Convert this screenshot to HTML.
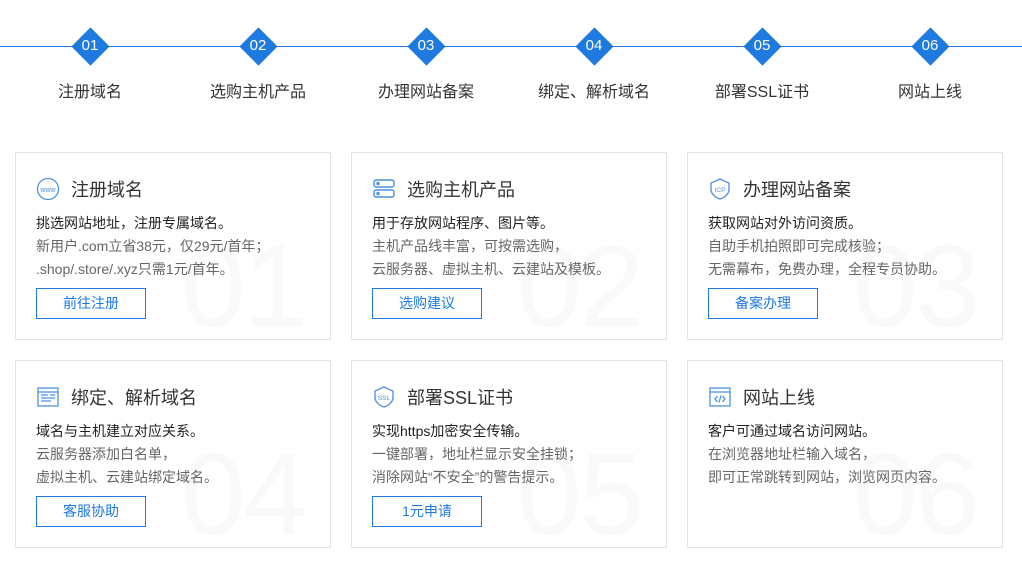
<!DOCTYPE html>
<html><head><meta charset="utf-8"><style>
*{margin:0;padding:0;box-sizing:border-box}
body{width:1022px;height:571px;background:#fff;font-family:"Liberation Sans","Noto Sans CJK SC",sans-serif;position:relative;overflow:hidden;color:#333}
.line{position:absolute;left:0;top:46px;width:1022px;height:1px;background:#1f7ae0}
.step{position:absolute;top:27px;width:168px;margin-left:-84px;text-align:center}
.dia{width:27px;height:27px;background:#1f7ae0;transform:rotate(45deg);margin:6px auto 0}
.num{position:absolute;top:10px;left:0;width:100%;color:#fff;font-size:15px}
.lab{position:absolute;top:51px;left:0;width:100%;font-size:16px;color:#333}
.card{position:absolute;width:316px;height:188px;border:1px solid #e5e5e5;overflow:hidden}
.big{position:absolute;right:24px;bottom:-14px;font-size:116px;color:#f9f9f9;font-weight:300;letter-spacing:-2px}
.ic{position:absolute;left:20px;top:24px;width:24px;height:24px}
.t{position:absolute;left:55px;top:23px;font-size:18px;color:#333}
.d{position:absolute;left:20px;top:59px;font-size:14px;line-height:23px;color:#666}
.d b{font-weight:normal;color:#222}
.btn{position:absolute;left:20px;top:135px;width:110px;height:31px;border:1px solid #1f7ae0;color:#1f7ae0;font-size:14px;text-align:center;line-height:29px}
</style></head><body>
<div class="line"></div>
<div class="step" style="left:90px"><div class="dia"></div><div class="num">01</div><div class="lab">注册域名</div></div>
<div class="step" style="left:258px"><div class="dia"></div><div class="num">02</div><div class="lab">选购主机产品</div></div>
<div class="step" style="left:426px"><div class="dia"></div><div class="num">03</div><div class="lab">办理网站备案</div></div>
<div class="step" style="left:594px"><div class="dia"></div><div class="num">04</div><div class="lab">绑定、解析域名</div></div>
<div class="step" style="left:762px"><div class="dia"></div><div class="num">05</div><div class="lab">部署SSL证书</div></div>
<div class="step" style="left:930px"><div class="dia"></div><div class="num">06</div><div class="lab">网站上线</div></div>

<div class="card" style="left:15px;top:152px"><div class="big">01</div>
<svg class="ic" viewBox="0 0 24 24"><circle cx="12" cy="12" r="10.5" fill="none" stroke="#4a90e2" stroke-width="1.3"/><text x="12" y="15" font-size="7" fill="#4a90e2" text-anchor="middle" font-family="Liberation Sans">www</text></svg>
<div class="t">注册域名</div>
<div class="d"><b>挑选网站地址，注册专属域名。</b><br>新用户.com立省38元，仅29元/首年；<br>.shop/.store/.xyz只需1元/首年。</div>
<div class="btn">前往注册</div></div>

<div class="card" style="left:351px;top:152px"><div class="big">02</div>
<svg class="ic" viewBox="0 0 24 24" fill="none" stroke="#4a90e2" stroke-width="1.4"><rect x="2" y="3" width="20" height="7" rx="2"/><rect x="2" y="13" width="20" height="7" rx="2"/><circle cx="6" cy="6.5" r="1" fill="#4a90e2"/><circle cx="6" cy="16.5" r="1" fill="#4a90e2"/></svg>
<div class="t">选购主机产品</div>
<div class="d"><b>用于存放网站程序、图片等。</b><br>主机产品线丰富，可按需选购，<br>云服务器、虚拟主机、云建站及模板。</div>
<div class="btn">选购建议</div></div>

<div class="card" style="left:687px;top:152px"><div class="big">03</div>
<svg class="ic" viewBox="0 0 24 24"><path d="M12 2 L21 6 V12 C21 17 17 20.5 12 22 C7 20.5 3 17 3 12 V6 Z" fill="none" stroke="#4a90e2" stroke-width="1.3"/><text x="12" y="15" font-size="6.5" fill="#4a90e2" text-anchor="middle" font-family="Liberation Sans">ICP</text></svg>
<div class="t">办理网站备案</div>
<div class="d"><b>获取网站对外访问资质。</b><br>自助手机拍照即可完成核验；<br>无需幕布，免费办理，全程专员协助。</div>
<div class="btn">备案办理</div></div>

<div class="card" style="left:15px;top:360px"><div class="big">04</div>
<svg class="ic" viewBox="0 0 24 24" fill="none" stroke="#4a90e2" stroke-width="1.3"><rect x="2" y="3" width="20" height="18"/><path d="M2 7H22M5 10H12M5 13H19M5 16H15M14 10H19"/></svg>
<div class="t">绑定、解析域名</div>
<div class="d"><b>域名与主机建立对应关系。</b><br>云服务器添加白名单，<br>虚拟主机、云建站绑定域名。</div>
<div class="btn">客服协助</div></div>

<div class="card" style="left:351px;top:360px"><div class="big">05</div>
<svg class="ic" viewBox="0 0 24 24"><path d="M12 2 L21 6 V12 C21 17 17 20.5 12 22 C7 20.5 3 17 3 12 V6 Z" fill="none" stroke="#4a90e2" stroke-width="1.3"/><text x="12" y="15" font-size="6.5" fill="#4a90e2" text-anchor="middle" font-family="Liberation Sans">SSL</text></svg>
<div class="t">部署SSL证书</div>
<div class="d"><b>实现https加密安全传输。</b><br>一键部署，地址栏显示安全挂锁；<br>消除网站“不安全”的警告提示。</div>
<div class="btn">1元申请</div></div>

<div class="card" style="left:687px;top:360px"><div class="big">06</div>
<svg class="ic" viewBox="0 0 24 24" fill="none" stroke="#4a90e2" stroke-width="1.3"><rect x="2" y="3" width="20" height="18"/><path d="M2 7H22M9.5 11L7 14L9.5 17M14.5 11L17 14L14.5 17M13 10.5L11 17.5"/></svg>
<div class="t">网站上线</div>
<div class="d"><b>客户可通过域名访问网站。</b><br>在浏览器地址栏输入域名，<br>即可正常跳转到网站，浏览网页内容。</div>
</div>
</body></html>
